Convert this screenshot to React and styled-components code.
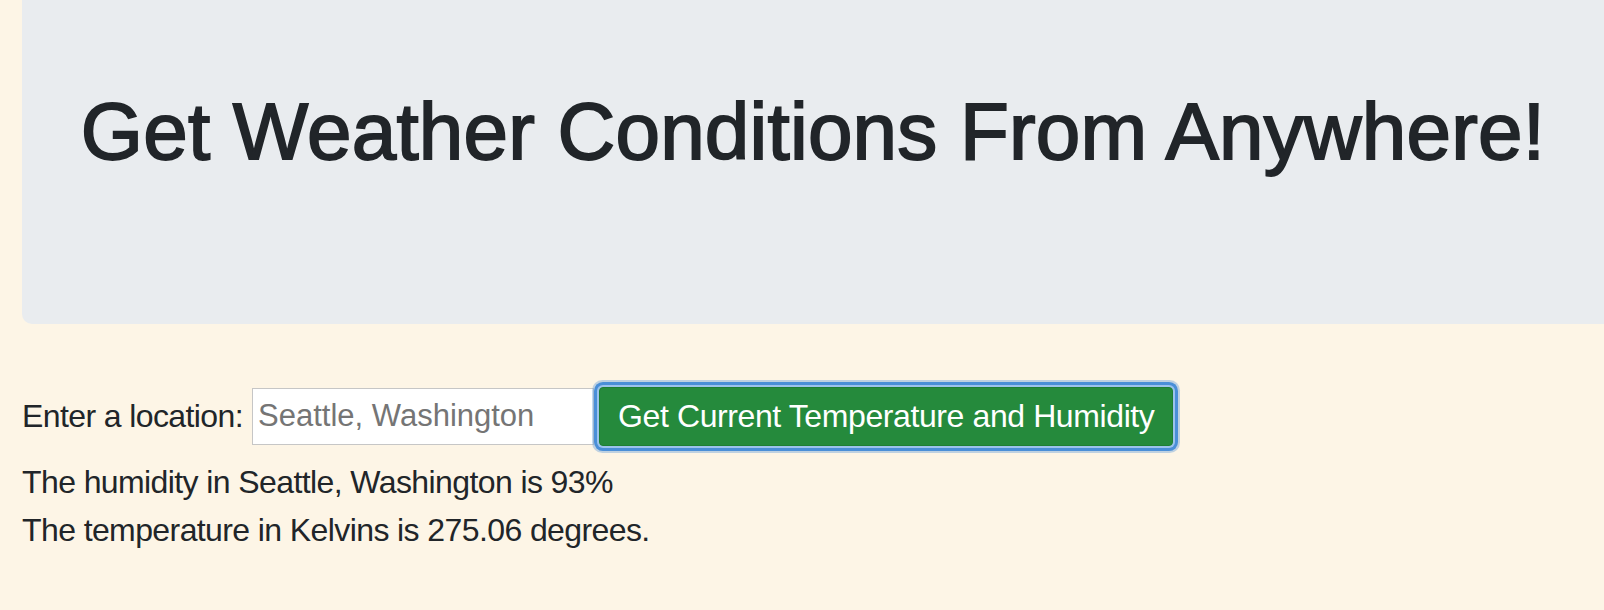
import React, { useState } from "react";
import styled, { createGlobalStyle } from "styled-components";

const GlobalStyle = createGlobalStyle`
  html, body {
    margin: 0;
    padding: 0;
    background: #fdf5e6;
    overflow: hidden;
  }
  body {
    font-family: "Liberation Sans", Arial, sans-serif;
    color: #212529;
  }
`;

const Page = styled.div`
  padding-left: 22px;
`;

const Jumbotron = styled.header`
  background: #e9ecef;
  border-radius: 0 0 0 10px;
  padding: 84px 0 128px;
  margin-bottom: 62px;
  text-align: center;
`;

const Title = styled.h1`
  margin: 0 0 16px;
  font-size: 80px;
  font-weight: 500;
  line-height: 1.2;
  letter-spacing: 0.2px;
  -webkit-text-stroke: 1.8px #212529;
`;

const Form = styled.form`
  display: flex;
  align-items: center;
  height: 60px;
  margin-bottom: 12px;
`;

const Label = styled.label`
  font-size: 32px;
  line-height: 1.5;
  letter-spacing: -0.6px;
  margin-right: 9px;
`;

const Input = styled.input`
  box-sizing: border-box;
  width: 342px;
  height: 57px;
  margin: 0;
  padding: 0 5px;
  border: 1px solid #c6c6c6;
  background: #fff;
  font-family: inherit;
  font-size: 31px;
  color: #212529;
  outline: none;

  &::placeholder {
    color: #757575;
  }
`;

const Button = styled.button`
  box-sizing: border-box;
  height: 59px;
  margin-left: 5px;
  padding: 0 18px;
  border: 1px solid #1e7e34;
  border-radius: 4px;
  background: #258a3c;
  color: #fff;
  font-family: inherit;
  font-size: 32px;
  line-height: 1.5;
  letter-spacing: -0.4px;
  box-shadow: 0 0 0 2px #9cc3ec, 0 0 0 5px #4a8fd8,
    0 0 0 7px rgba(74, 143, 216, 0.35);
  cursor: pointer;
`;

const Result = styled.div`
  font-size: 32px;
  line-height: 48px;
  letter-spacing: -0.6px;
`;

export default function App() {
  const [location, setLocation] = useState("");
  const data = { place: "Seattle, Washington", humidity: 93, temp: "275.06" };

  return (
    <>
      <GlobalStyle />
      <Page>
        <Jumbotron>
          <Title>Get Weather Conditions From Anywhere!</Title>
        </Jumbotron>
        <Form onSubmit={(e) => e.preventDefault()}>
          <Label htmlFor="loc">Enter a location:</Label>
          <Input
            id="loc"
            placeholder="Seattle, Washington"
            value={location}
            onChange={(e) => setLocation(e.target.value)}
          />
          <Button type="submit">Get Current Temperature and Humidity</Button>
        </Form>
        <Result>
          The humidity in {data.place} is {data.humidity}%
        </Result>
        <Result>The temperature in Kelvins is {data.temp} degrees.</Result>
      </Page>
    </>
  );
}
